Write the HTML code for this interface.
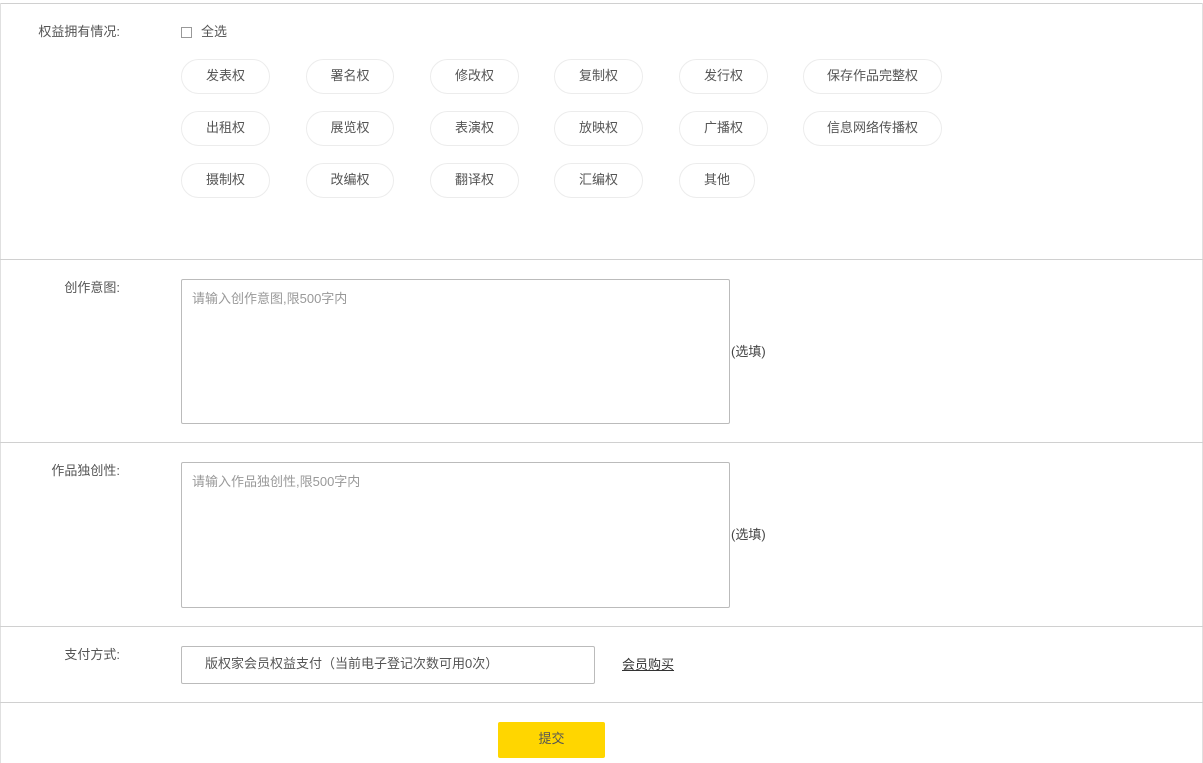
<!DOCTYPE html>
<html><head><meta charset="utf-8"><style>
*{box-sizing:border-box;margin:0;padding:0}
body{width:1203px;height:760px;background:#fff;font-family:"Liberation Sans","Noto Sans CJK SC",sans-serif;font-size:13px;color:#555;position:relative;overflow:hidden}
.a{position:absolute}
.hl{position:absolute;left:0;width:1203px;height:1px;background:#d0d0d0}
.vl{position:absolute;top:3px;width:1px;height:760px;background:#e0e0e0}
.lab{position:absolute;right:1083px;white-space:nowrap;color:#555}
.pill{position:absolute;height:35px;border:1px solid #ececec;border-radius:18px;text-align:center;line-height:31px;color:#555}
.ta{position:absolute;left:181px;width:549px;border:1px solid #bbb;border-radius:2px;padding:8px 10px;color:#999}
</style></head><body>
<div class="hl" style="top:3px"></div>
<div class="vl" style="left:0"></div><div class="vl" style="left:1202px"></div>
<div class="lab" style="top:21px">权益拥有情况:</div>
<div class="a" style="left:181px;top:27px;width:11px;height:11px;border:1px solid #999"></div>
<div class="a" style="left:201px;top:21px;color:#555">全选</div>
<div class="pill" style="left:181px;top:59px;width:89px">发表权</div>
<div class="pill" style="left:306px;top:59px;width:88px">署名权</div>
<div class="pill" style="left:430px;top:59px;width:89px">修改权</div>
<div class="pill" style="left:554px;top:59px;width:89px">复制权</div>
<div class="pill" style="left:679px;top:59px;width:89px">发行权</div>
<div class="pill" style="left:803px;top:59px;width:139px">保存作品完整权</div>
<div class="pill" style="left:181px;top:111px;width:89px">出租权</div>
<div class="pill" style="left:306px;top:111px;width:88px">展览权</div>
<div class="pill" style="left:430px;top:111px;width:89px">表演权</div>
<div class="pill" style="left:554px;top:111px;width:89px">放映权</div>
<div class="pill" style="left:679px;top:111px;width:89px">广播权</div>
<div class="pill" style="left:803px;top:111px;width:139px">信息网络传播权</div>
<div class="pill" style="left:181px;top:163px;width:89px">摄制权</div>
<div class="pill" style="left:306px;top:163px;width:88px">改编权</div>
<div class="pill" style="left:430px;top:163px;width:89px">翻译权</div>
<div class="pill" style="left:554px;top:163px;width:89px">汇编权</div>
<div class="pill" style="left:679px;top:163px;width:76px">其他</div>
<div class="hl" style="top:259px"></div>
<div class="lab" style="top:277px">创作意图:</div>
<div class="ta" style="top:279px;height:145px">请输入创作意图,限500字内</div>
<div class="a" style="left:731px;top:341px;color:#444">(选填)</div>
<div class="hl" style="top:442px"></div>
<div class="lab" style="top:460px">作品独创性:</div>
<div class="ta" style="top:462px;height:146px">请输入作品独创性,限500字内</div>
<div class="a" style="left:731px;top:524px;color:#444">(选填)</div>
<div class="hl" style="top:626px"></div>
<div class="lab" style="top:644px">支付方式:</div>
<div class="a" style="left:181px;top:646px;width:414px;height:38px;border:1px solid #bbb;border-radius:2px;padding-left:23px;line-height:33px;color:#555">版权家会员权益支付（当前电子登记次数可用0次）</div>
<div class="a" style="left:622px;top:654px;color:#333;text-decoration:underline">会员购买</div>
<div class="hl" style="top:702px"></div>
<div class="a" style="left:498px;top:722px;width:107px;height:36px;background:#ffd600;border-radius:2px;text-align:center;line-height:33px;color:#555">提交</div>
</body></html>
